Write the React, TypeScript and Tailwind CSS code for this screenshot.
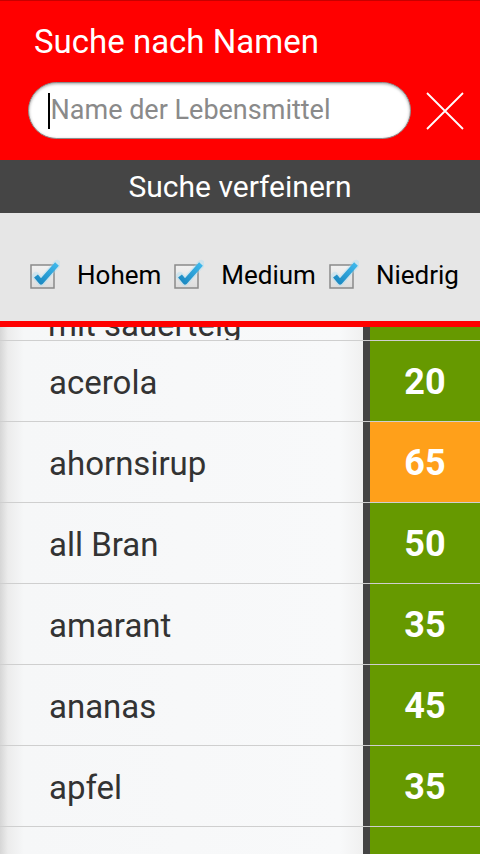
import React from 'react';

type Food = { name: string; gi: number | null };

const foods: Food[] = [
  { name: 'acerola', gi: 20 },
  { name: 'ahornsirup', gi: 65 },
  { name: 'all Bran', gi: 50 },
  { name: 'amarant', gi: 35 },
  { name: 'ananas', gi: 45 },
  { name: 'apfel', gi: 35 },
  { name: '', gi: null },
];

const rowBg =
  'bg-[linear-gradient(to_right,#d6d6d6_0px,#ececec_8px,#f6f7f8_24px,#f8f9fa_340px,#f0f0f0_363px)]';

const CheckBox: React.FC<{ label: string; gap: string }> = ({ label, gap }) => (
  <div className={`flex items-center ${gap}`}>
    <svg width="30" height="30" viewBox="0 0 30 30" className="mr-[17px] -mt-[2px]">
      <defs>
        <linearGradient id="box" x1="0" y1="0" x2="0" y2="1">
          <stop offset="0" stopColor="#f2f2f2" />
          <stop offset="1" stopColor="#dcdcdc" />
        </linearGradient>
        <linearGradient id="tick" x1="0" y1="1" x2="1" y2="0">
          <stop offset="0" stopColor="#1a87c0" />
          <stop offset="1" stopColor="#3db8ec" />
        </linearGradient>
      </defs>
      <rect x="1" y="6" width="23" height="23" fill="url(#box)" stroke="#8a8a8a" strokeWidth="1.5" />
      <path d="M6 17 L11 23 L27 5" fill="none" stroke="#9fdcf5" strokeWidth="8" strokeLinecap="round" strokeLinejoin="round" opacity="0.35" />
      <path d="M6 17 L11 23 L27 5" fill="none" stroke="url(#tick)" strokeWidth="5" strokeLinejoin="round" />
    </svg>
    <span className="text-[26px] leading-none text-black">{label}</span>
  </div>
);

const App: React.FC = () => {
  return (
    <div className="w-[480px] h-[854px] overflow-hidden bg-[#f7f8f9] font-['Roboto','Liberation_Sans',sans-serif]">
      {/* header */}
      <div className="h-[160px] bg-[#ff0000] border-t border-[#c80000]">
        <div className="pl-[34px] pt-[25px] text-[33px] leading-[32px] text-white">Suche nach Namen</div>
        <div className="mt-[24px] flex items-center">
          <div className="ml-[28px] w-[383px] h-[57px] rounded-full bg-white border border-[#8c8c8c] shadow-[inset_0_1px_3px_rgba(0,0,0,0.35)] flex items-center pl-[19px]">
            <div className="w-[1.5px] h-[36px] bg-black" />
            <span className="ml-[1px] text-[27px] leading-none text-[#8a8a8a]">Name der Lebensmittel</span>
          </div>
          <svg width="38" height="38" viewBox="0 0 38 38" className="ml-[15px]">
            <path d="M1 1 L37 37 M37 1 L1 37" stroke="#ffffff" strokeWidth="1.8" />
          </svg>
        </div>
      </div>

      <div className="h-[53px] bg-[#454545] flex items-center justify-center text-[30px] text-white leading-none">
        Suche verfeinern
      </div>

      <div className="h-[108px] bg-[#e6e6e6] flex items-center pt-[16px] pl-[30px]">
        <CheckBox label="Hohem" gap="mr-[13px]" />
        <CheckBox label="Medium" gap="mr-[13px]" />
        <CheckBox label="Niedrig" gap="" />
      </div>
      <div className="h-[6px] bg-[#ff0000]" />

      {/* list */}
      <div className="flex h-[13px] overflow-hidden">
        <div className={`w-[363px] ${rowBg}`}>
          <div className="pl-[48px] -mt-[18px] text-[33px] leading-[32px] text-[#333333]">mit sauerteig</div>
        </div>
        <div className="w-[7px] bg-[#444444]" />
        <div className="flex-1 bg-[#669900]" />
      </div>
      {foods.map((f, i) => (
        <div key={i} className="border-t border-[#cfcfcf] flex h-[81px]">
          <div className={`w-[363px] flex items-center pl-[49px] pt-[3px] text-[33px] text-[#333333] ${rowBg}`}>
            {f.name}
          </div>
          <div className="w-[7px] bg-[#444444]" />
          <div
            className={`flex-1 flex items-center justify-center pt-[2px] text-[36px] font-bold text-white ${
              f.gi !== null && f.gi > 55 ? 'bg-[#ffa01a]' : 'bg-[#669900]'
            }`}
          >
            {f.gi}
          </div>
        </div>
      ))}
    </div>
  );
};

export default App;
